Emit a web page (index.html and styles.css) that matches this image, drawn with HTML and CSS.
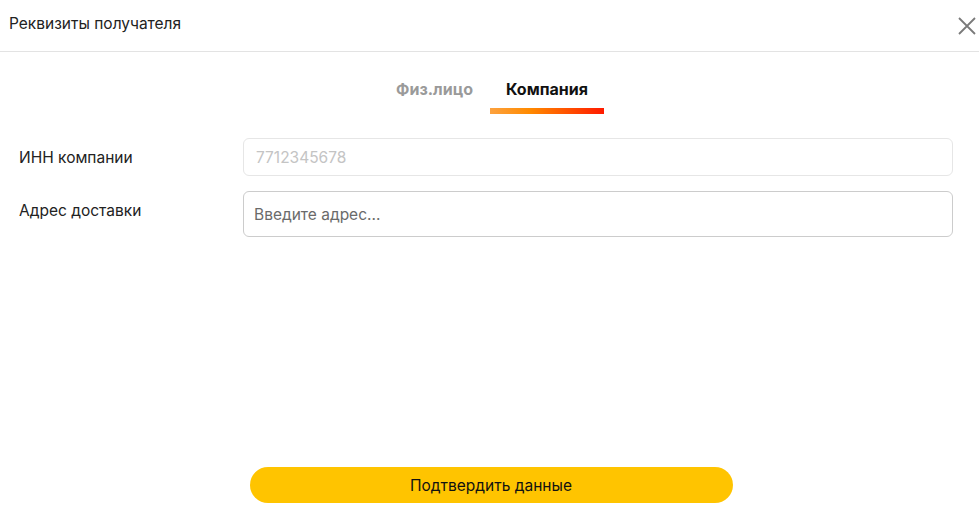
FILE: index.html
```html
<!DOCTYPE html>
<html lang="ru">
<head>
<meta charset="utf-8">
<title>Реквизиты получателя</title>
<link rel="stylesheet" href="styles.css">
</head>
<body>
<div class="modal">
  <header class="modal-header">
    <h1 class="modal-title">Реквизиты получателя</h1>
    <button class="close-btn" aria-label="Закрыть">
      <svg width="18" height="18" viewBox="0 0 18 18"><path d="M1 1 L17 17 M17 1 L1 17" stroke="#7a7a7a" stroke-width="1.8" fill="none"/></svg>
    </button>
  </header>
  <nav class="tabs">
    <div class="tab">Физ.лицо</div>
    <div class="tab tab-active">Компания</div>
  </nav>
  <form class="form">
    <div class="form-row">
      <label class="form-label">ИНН компании</label>
      <input class="input input-inn" type="text" placeholder="7712345678">
    </div>
    <div class="form-row">
      <label class="form-label">Адрес доставки</label>
      <input class="input input-address" type="text" placeholder="Введите адрес...">
    </div>
  </form>
  <div class="footer">
    <button class="submit-btn" type="button">Подтвердить данные</button>
  </div>
</div>
</body>
</html>
```
FILE: styles.css
```css
* { box-sizing: border-box; }
html, body { margin: 0; padding: 0; background: #fff; }
body {
  font-family: Inter, "Noto Sans", "Liberation Sans", sans-serif;
  color: #222;
}
.modal {
  height: 518px;
  display: flex;
  flex-direction: column;
}
.modal-header {
  height: 52px;
  border-bottom: 1px solid #e3e3e3;
  display: flex;
  align-items: center;
  justify-content: space-between;
  padding: 0 3px 3px 9px;
}
.modal-title {
  margin: 0;
  font-size: 15.5px;
  font-weight: 400;
  color: #222;
  line-height: 20px;
}
.close-btn {
  border: 0;
  background: none;
  padding: 0;
  width: 18px;
  height: 18px;
  display: flex;
  margin-top: 3px;
}
.tabs {
  display: flex;
  justify-content: center;
  padding: 27px 0 0 5px;
  gap: 1px;
}
.tab {
  position: relative;
  padding: 0 16px 15px;
  font-size: 16px;
  line-height: 20px;
  font-weight: 700;
  color: #9a9a9a;
}
.tab-active { color: #111; }
.tab-active::after {
  content: "";
  position: absolute;
  left: 0; right: 0; bottom: 0;
  height: 6px;
  background: linear-gradient(90deg, #fca23f 0%, #ff8a00 35%, #ff1a00 100%);
}
.form {
  margin-top: 24px;
  padding: 0 26px 0 19px;
  display: flex;
  flex-direction: column;
  gap: 15px;
}
.form-row {
  display: flex;
  align-items: flex-start;
}
.form-label {
  width: 224px;
  flex: none;
  font-size: 15.5px;
  line-height: 20px;
  padding-top: 10px;
  color: #222;
}
.input {
  flex: 1;
  font-family: inherit;
  font-size: 15.5px;
  border-radius: 6px;
  background: #fff;
  outline: none;
  color: #222;
}
.input-inn {
  height: 38px;
  border: 1px solid #e6e6e6;
  padding: 0 12px;
}
.input-inn::placeholder { color: #c4c4c4; }
.input-address {
  height: 46px;
  border: 1px solid #cccccc;
  padding: 0 10px;
}
.input-address::placeholder { color: #6a6a6a; }
.footer {
  margin-top: auto;
  padding: 0 0 15px 3px;
  display: flex;
  justify-content: center;
}
.submit-btn {
  width: 483px;
  height: 36px;
  border: 0;
  border-radius: 18px;
  background: #ffc400;
  font-family: inherit;
  font-size: 15.5px;
  color: #111;
}
```
